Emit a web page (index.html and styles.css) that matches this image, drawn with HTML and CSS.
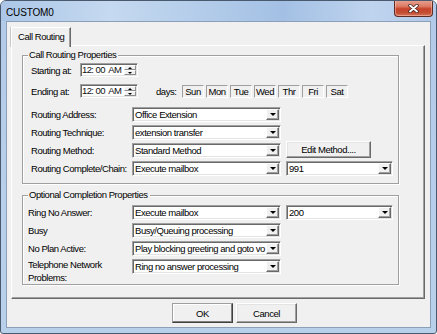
FILE: index.html
```html
<!DOCTYPE html>
<html>
<head>
<meta charset="utf-8">
<title>CUSTOM0</title>
<link rel="stylesheet" href="styles.css">
</head>
<body>
<div class="window">
  <div class="titlebar">
    <span class="title">CUSTOM0</span>
    <div class="close">
      <svg width="11" height="9" viewBox="0 0 11 9">
        <path d="M2 1.5 L9 7.5 M9 1.5 L2 7.5" stroke="#3b1f1a" stroke-width="3.4" stroke-linecap="round" fill="none"/>
        <path d="M2 1.5 L9 7.5 M9 1.5 L2 7.5" stroke="#ffffff" stroke-width="1.9" stroke-linecap="round" fill="none"/>
      </svg>
    </div>
  </div>
  <div class="frame">
    <div class="client">
      <div class="tabs"><div class="tab">Call Routing</div></div>
      <div class="panel">
        <div class="group g1">
          <div class="group-title">Call Routing Properties</div>
          <div class="row time-row">
            <span class="lbl-time">Starting at:</span>
            <div class="timebox">
              <span class="time-text">12: 00  AM</span>
              <div class="spin"><div class="spin-btn"><i class="arr-up"></i></div><div class="spin-btn"><i class="arr-down"></i></div></div>
            </div>
          </div>
          <div class="row time-row second">
            <span class="lbl-time">Ending at:</span>
            <div class="timebox">
              <span class="time-text">12: 00  AM</span>
              <div class="spin"><div class="spin-btn"><i class="arr-up"></i></div><div class="spin-btn"><i class="arr-down"></i></div></div>
            </div>
            <span class="days-lbl">days:</span>
            <div class="days">
              <span class="day">Sun</span><span class="day">Mon</span><span class="day">Tue</span><span class="day">Wed</span><span class="day">Thr</span><span class="day">Fri</span><span class="day">Sat</span>
            </div>
          </div>
          <div class="row first-combo">
            <span class="lbl">Routing Address:</span>
            <div class="combo"><span class="combo-text">Office Extension</span><span class="combo-btn"><i class="arr-down"></i></span></div>
          </div>
          <div class="row">
            <span class="lbl">Routing Technique:</span>
            <div class="combo"><span class="combo-text">extension transfer</span><span class="combo-btn"><i class="arr-down"></i></span></div>
          </div>
          <div class="row">
            <span class="lbl">Routing Method:</span>
            <div class="combo"><span class="combo-text">Standard Method</span><span class="combo-btn"><i class="arr-down"></i></span></div>
            <div class="btn edit-btn">Edit Method....</div>
          </div>
          <div class="row">
            <span class="lbl">Routing Complete/Chain:</span>
            <div class="combo"><span class="combo-text">Execute mailbox</span><span class="combo-btn"><i class="arr-down"></i></span></div>
            <div class="combo side-combo"><span class="combo-text">991</span><span class="combo-btn"><i class="arr-down"></i></span></div>
          </div>
        </div>
        <div class="group g2">
          <div class="group-title">Optional Completion Properties</div>
          <div class="row">
            <span class="lbl">Ring No Answer:</span>
            <div class="combo"><span class="combo-text">Execute mailbox</span><span class="combo-btn"><i class="arr-down"></i></span></div>
            <div class="combo side-combo"><span class="combo-text">200</span><span class="combo-btn"><i class="arr-down"></i></span></div>
          </div>
          <div class="row">
            <span class="lbl">Busy</span>
            <div class="combo"><span class="combo-text">Busy/Queuing processing</span><span class="combo-btn"><i class="arr-down"></i></span></div>
          </div>
          <div class="row">
            <span class="lbl">No Plan Active:</span>
            <div class="combo"><span class="combo-text">Play blocking greeting and goto vo</span><span class="combo-btn"><i class="arr-down"></i></span></div>
          </div>
          <div class="row tall-row">
            <span class="lbl lbl-two">Telephone Network<br>Problems:</span>
            <div class="combo"><span class="combo-text">Ring no answer processing</span><span class="combo-btn"><i class="arr-down"></i></span></div>
          </div>
        </div>
      </div>
      <div class="buttons">
        <div class="btn dlg-btn default">OK</div>
        <div class="btn dlg-btn">Cancel</div>
      </div>
    </div>
  </div>
</div>
</body>
</html>
```

FILE: styles.css
```css
* { box-sizing: border-box; }
html, body { margin: 0; padding: 0; background: #ffffff; }
body {
  width: 437px;
  height: 334px;
  overflow: hidden;
  font-family: "Liberation Sans", Arial, sans-serif;
  font-size: 9.5px;
  letter-spacing: -0.45px;
  color: #000;
}

.window {
  width: 437px;
  height: 334px;
  border: 1px solid #4a5a6e;
  border-radius: 6px 6px 3px 3px;
  background: linear-gradient(180deg, #bfd4ed 0px, #b3cbe8 22px, #b7cfea 200px, #b9d0ea 100%);
  display: flex;
  flex-direction: column;
  overflow: hidden;
}

.titlebar {
  height: 20px;
  flex: none;
  display: flex;
  align-items: flex-start;
  padding-left: 5px;
  background: linear-gradient(90deg, #abc6e7 0%, #c5d9f0 25%, #b4cdea 45%, #a3c0e4 65%, #bfd4ee 85%, #b1c9e8 100%);
}
.title {
  font-size: 10px;
  letter-spacing: -0.15px;
  line-height: 12px;
  margin-top: 6px;
  color: #000;
}
.close {
  margin-left: auto;
  margin-right: 3px;
  margin-top: -1px;
  width: 39px;
  height: 17px;
  border: 1px solid #5e2c25;
  border-top: none;
  border-radius: 0 0 4px 4px;
  background: linear-gradient(180deg, #e8a595 0%, #dc7a63 40%, #c7432a 55%, #c24e33 80%, #d9775c 100%);
  box-shadow: inset 0 0 0 1px rgba(255, 210, 200, 0.45);
  display: flex;
  align-items: center;
  justify-content: center;
}

.frame {
  flex: 1;
  display: flex;
  padding: 0 5px 5px 5px;
}
.client {
  flex: 1;
  border: 1px solid #8b9fb9;
  background: #f0f0f0;
  padding: 5px 5px 0 4px;
  display: flex;
  flex-direction: column;
}

.tabs {
  height: 18px;
  display: flex;
  flex: none;
}
.tab {
  position: relative;
  z-index: 1;
  width: 60px;
  height: 20px;
  padding-left: 6px;
  line-height: 18px;
  background: #f0f0f0;
  border-left: 1px solid #ffffff;
  border-top: 1px solid #ffffff;
  border-right: 1px solid #696969;
  box-shadow: inset -1px 0 0 #a0a0a0, -1px 0 0 #c8c8c8;
}

.panel {
  height: 254px;
  flex: none;
  border-top: 1px solid #ffffff;
  border-left: 1px solid #ffffff;
  border-right: 1px solid #696969;
  border-bottom: 1px solid #696969;
  box-shadow: inset -1px -1px 0 #a0a0a0;
  padding: 9px 0 0 10px;
  display: flex;
  flex-direction: column;
}

.group {
  position: relative;
  width: 377px;
  border: 1px solid #a0a0a0;
  box-shadow: inset 1px 1px 0 #ffffff, 1px 1px 0 #ffffff;
  display: flex;
  flex-direction: column;
}
.group-title {
  position: absolute;
  top: -7px;
  left: 5px;
  padding: 0 2px 0 1px;
  line-height: 12px;
  background: #f0f0f0;
}
.g1 { padding: 7px 0 7px 8px; }
.g2 { margin-top: 11px; padding: 9px 0 0 5px; }

.row {
  display: flex;
  align-items: center;
  height: 15px;
  margin-top: 3px;
}
.time-row { height: 14px; margin-top: 0; }
.time-row.second { margin-top: 7px; }
.first-combo { margin-top: 9px; }
.g2 .group-title + .row { margin-top: 0; }

.lbl { width: 101px; flex: none; white-space: nowrap; }
.g2 .lbl { width: 104px; }
.lbl-time { width: 49px; flex: none; white-space: nowrap; }
.tall-row { height: 25px; align-items: flex-start; }
.lbl-two { line-height: 13px; margin-top: -1px; }

.timebox {
  width: 58px;
  height: 14px;
  flex: none;
  display: flex;
  background: #ffffff;
  border-top: 1px solid #a0a0a0;
  border-left: 1px solid #a0a0a0;
  border-right: 1px solid #ffffff;
  border-bottom: 1px solid #ffffff;
  box-shadow: inset 1px 1px 0 #696969, inset -1px -1px 0 #e3e3e3;
}
.time-text {
  flex: 1;
  min-width: 0;
  overflow: hidden;
  white-space: pre;
  font-size: 9.5px;
  letter-spacing: -0.6px;
  line-height: 12px;
  padding-left: 1px;
  color: #101010;
}
.spin {
  width: 13px;
  flex: none;
  display: flex;
  flex-direction: column;
  padding: 1px 1px 1px 0;
}
.spin-btn {
  flex: 1;
  display: flex;
  align-items: center;
  justify-content: center;
  background: #f0f0f0;
  border-top: 1px solid #ffffff;
  border-left: 1px solid #ffffff;
  border-right: 1px solid #8c8c8c;
  border-bottom: 1px solid #8c8c8c;
}
.arr-up {
  width: 0; height: 0;
  border-left: 2px solid transparent;
  border-right: 2px solid transparent;
  border-bottom: 2px solid #000;
}
.arr-down {
  width: 0; height: 0;
  border-left: 3px solid transparent;
  border-right: 3px solid transparent;
  border-top: 3px solid #000;
}
.spin .arr-down {
  border-left-width: 2px;
  border-right-width: 2px;
  border-top-width: 2px;
}

.days-lbl { margin-left: 18px; width: 26px; flex: none; }
.days { display: flex; gap: 2px; }
.day {
  width: 22px;
  height: 13px;
  line-height: 11px;
  text-align: center;
  border-top: 1px solid #a0a0a0;
  border-left: 1px solid #a0a0a0;
  border-right: 1px solid #ffffff;
  border-bottom: 1px solid #ffffff;
}

.combo {
  width: 149px;
  height: 15px;
  flex: none;
  display: flex;
  background: #ffffff;
  border-top: 1px solid #a0a0a0;
  border-left: 1px solid #a0a0a0;
  border-right: 1px solid #ffffff;
  border-bottom: 1px solid #ffffff;
  box-shadow: inset 1px 1px 0 #696969, inset -1px -1px 0 #e3e3e3;
}
.side-combo { width: 107px; margin-left: 5px; }
.combo-text {
  flex: 1;
  min-width: 0;
  overflow: hidden;
  white-space: nowrap;
  line-height: 13px;
  padding-left: 2px;
}
.combo-btn {
  width: 13px;
  flex: none;
  margin: 1px 1px 1px 0;
  display: flex;
  align-items: center;
  justify-content: center;
  background: #f0f0f0;
  border-top: 1px solid #ffffff;
  border-left: 1px solid #ffffff;
  border-right: 1px solid #696969;
  border-bottom: 1px solid #696969;
  box-shadow: inset -1px -1px 0 #a0a0a0;
}

.btn {
  display: flex;
  align-items: center;
  justify-content: center;
  background: #f0f0f0;
  border-top: 1px solid #ffffff;
  border-left: 1px solid #ffffff;
  border-right: 1px solid #696969;
  border-bottom: 1px solid #696969;
  box-shadow: inset -1px -1px 0 #a0a0a0, inset 1px 1px 0 #e3e3e3;
}
.edit-btn {
  width: 85px;
  height: 17px;
  flex: none;
  margin-left: 5px;
  margin-top: -2px;
}

.buttons {
  display: flex;
  gap: 3px;
  padding-left: 161px;
  margin-top: 4px;
}
.dlg-btn { width: 61px; height: 20px; }
.dlg-btn.default {
  border-color: #a0a0a0 #404040 #404040 #a0a0a0;
  box-shadow: inset -1px -1px 0 #808080, inset 1px 1px 0 #ffffff;
}
```
